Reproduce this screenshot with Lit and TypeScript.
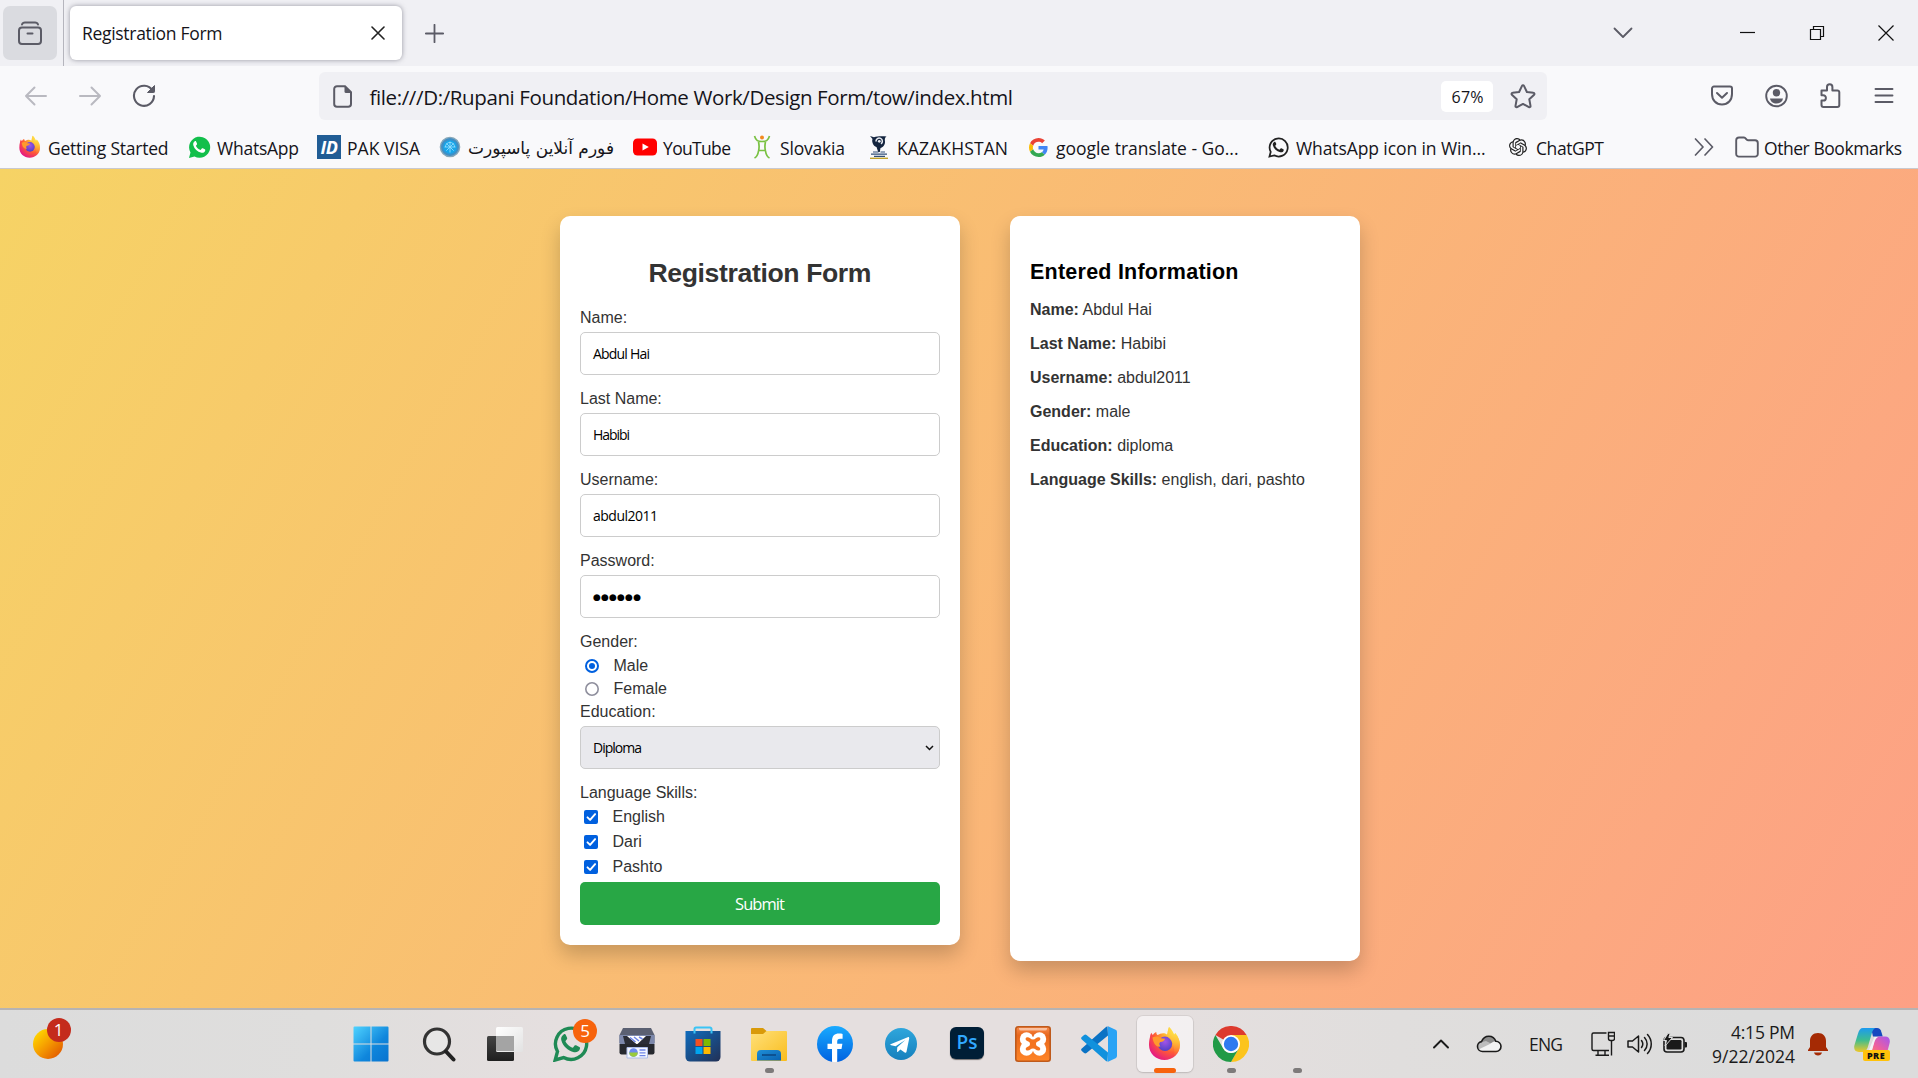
import { LitElement, html, svg, css } from "lit";
import { customElement, property } from "lit/decorators.js";

/** A single line of text, tracked so that it fills the given width. */
@customElement("fit-text")
class FitText extends LitElement {
  @property() text = "";
  @property({ type: Number }) w = 0;
  static styles = css`
    :host { display: block; flex: none; white-space: pre; }
    .t { display: inline-block; }
  `;
  render() {
    return html`<span class="t">${this.text}</span>`;
  }
  updated() {
    const el = this.renderRoot.querySelector(".t") as HTMLElement;
    el.style.letterSpacing = "0px";
    const natural = el.getBoundingClientRect().width;
    const n = this.text.length;
    if (this.w && n > 1) {
      el.style.letterSpacing = `${(this.w - natural) / (n - 1)}px`;
      this.style.width = `${this.w}px`;
    }
  }
}

const fit = (text: string, w: number) => html`<fit-text .text=${text} .w=${w}></fit-text>`;
const ico = (w: number, h: number, box: string, body: unknown) =>
  html`<svg width=${w} height=${h} viewBox=${box} fill="none" style="display:block;flex:none">${body}</svg>`;

const S = "#5b5b66";

const firefoxBody = (id: string) => svg`
  <defs>
    <radialGradient id=${id + "a"} cx="0.8" cy="0.12" r="1"><stop offset="0" stop-color="#fff44f"/><stop offset=".35" stop-color="#ffb02e"/><stop offset=".65" stop-color="#ff5a36"/><stop offset="1" stop-color="#e31587"/></radialGradient>
    <radialGradient id=${id + "b"} cx=".5" cy=".35" r=".7"><stop offset="0" stop-color="#a354e8"/><stop offset="1" stop-color="#4a3fc4"/></radialGradient>
    <linearGradient id=${id + "c"} x1="1" y1="0" x2="0.6" y2="1"><stop offset="0" stop-color="#fff44f"/><stop offset="1" stop-color="#ffa02e" stop-opacity="0.1"/></linearGradient>
  </defs>
  <path d="M3 11c0-2 .9-3.500 1.500-4.300.2 1 .7 1.800 1.400 2.300C6.500 7.600 8 6.400 9.300 5.900c-.1 1 .4 2.400 1.300 3.200C13 7.500 17 6 20 8.500c1-1.500.5-4.500 2-7.500 3 2.500 4 5.500 5 7.500.9-.3 1-1 1-1.700C31.500 11 33 15 33 19c0 8.500-7 15-15.500 15S2 27.500 2 19c0-3 .3-5.500 1-8z" fill=${`url(#${id}a)`}/>
  <circle cx="18" cy="17.800" r="7.200" fill=${`url(#${id}b)`}/>
  <path d="M5.500 11.500c3-1.500 6-1.500 8.500.8l4 .4c-.3 2-2 2.900-4.600 3.400-1.300.5-1.500 2.500 0 4.400-4.400 1-7.200-3.500-7.900-9z" fill="#ff9a2c"/>
  <path d="M22 1c3 2.500 4 5.500 5 7.500.9-.3 1-1 1-1.700C31.500 11 33 15 33 19c0 5-2.500 9-6 11 1-4 .5-14-6.500-19C20 8 20.700 4 22 1z" fill=${`url(#${id}c)`}/>`;

const phone = "M10.600 8.400c.7-.7 1.600-.6 2 .2l1.500 3.100c.3.700.1 1.300-.4 1.900l-1 1.100c-.3.400-.3.800 0 1.300 1.600 2.700 3.600 4.400 6.200 5.600.5.200.9.200 1.200-.2l1.500-1.800c.4-.5 1-.6 1.500-.3l3.200 1.600c.7.400.9.800.7 1.600-.6 2.900-3.300 4.300-6 3.700-6.500-1.600-11-5.900-12.700-11.900-.6-2.300.3-4.500 2.300-5.900z";

const waGreen = ico(23, 23, "0 0 36 36", svg`<path d="M1.500 34.500l2.400-8.700A16.500 16.500 0 1 1 10.200 32z" fill="#12bf4b"/><path d=${phone} fill="#fff"/>`);
const waBlack = ico(21, 21, "0 0 36 36", svg`<path d="M2.500 33.500l2.200-8.100A15.500 15.500 0 1 1 10.600 31.400z" stroke="#222" stroke-width="3"/><path d=${phone} fill="#222"/>`);
const idIcon = html`<span class="id-ico">ID</span>`;
const globe = ico(22, 22, "0 0 24 24", svg`<circle cx="12" cy="12" r="10.500" fill="#3f8fc6" stroke="#87a7b8" stroke-width="1.500"/><circle cx="12" cy="12" r="7.500" fill="#18a5e8"/><path d="M7 12a5 5 0 0 1 10 0M12 6v12M8 8l8 8M16 8l-8 8M6 12h12" stroke="#8fdcff" stroke-width="1"/>`);
const yt = ico(24, 18, "0 0 24 18", svg`<rect x="0" y=".5" width="24" height="17" rx="4.500" fill="#f00"/><path d="M9.500 5.500v7l6.300-3.500z" fill="#fff"/>`);
const slovakia = ico(24, 24, "0 0 24 24", svg`<circle cx="12" cy="2.500" r="2" fill="#f28a1e"/><path d="M4.500 1c1.500 5 3.500 5.500 7.500 5.500S18 6 19.500 1M8.500 7c.8 3 .8 6 0 9M15.500 7c-.8 3-.8 6 0 9M8.500 15.500h7M8.500 16c-.5 3.500-2 6-4 7M15.500 16c.5 3.500 2 6 4 7" stroke="#79c142" stroke-width="1.700"/>`);
const kaz = ico(24, 24, "0 0 24 24", svg`<path d="M3 1l4 1.200c3-1 8-1.400 12.500-.7-2 1-1.800 3-1.500 5 .3 3.500-2.500 6-4.500 6.500L12.800 17h-1.600L9.500 12C6 11 4.500 6.500 5.500 4z" fill="#14253f"/><path d="M9 6.500a3.200 3.200 0 1 1 5 2.400" stroke="#e9ecf2" stroke-width="1.500"/><circle cx="12.300" cy="6.300" r="1.400" fill="#e9ecf2"/><path d="M4 19.200h16M6 17h5.500M13.500 17h4.500M7 21.300h11" stroke="#33507a" stroke-width="1.200"/><path d="M3 23.300h18" stroke="#c0a22c" stroke-width="1.400"/>`);
const google = ico(19, 19, "0 0 48 48", svg`<path fill="#EA4335" d="M24 9.500c3.540 0 6.710 1.220 9.210 3.600l6.850-6.850C35.900 2.380 30.470 0 24 0 14.620 0 6.510 5.380 2.560 13.220l7.980 6.190C12.430 13.720 17.740 9.500 24 9.500z"/><path fill="#4285F4" d="M46.980 24.550c0-1.570-.15-3.090-.38-4.550H24v9.020h12.940c-.58 2.960-2.260 5.480-4.780 7.180l7.730 6c4.510-4.180 7.090-10.360 7.090-17.650z"/><path fill="#FBBC05" d="M10.530 28.590c-.48-1.450-.76-2.990-.76-4.590s.27-3.140.76-4.590l-7.980-6.190C.92 16.460 0 20.120 0 24c0 3.880.92 7.540 2.560 10.780l7.970-6.190z"/><path fill="#34A853" d="M24 48c6.480 0 11.930-2.130 15.890-5.810l-7.730-6c-2.150 1.450-4.920 2.300-8.160 2.300-6.260 0-11.570-4.220-13.470-9.910l-7.980 6.190C6.510 42.620 14.620 48 24 48z"/>`);
const gpt = ico(18, 18, "0 0 24 24", svg`<path fill="#222" d="M22.2819 9.8211a5.9847 5.9847 0 0 0-.5157-4.9108 6.0462 6.0462 0 0 0-6.5098-2.9A6.0651 6.0651 0 0 0 4.9807 4.1818a5.9847 5.9847 0 0 0-3.9977 2.9 6.0462 6.0462 0 0 0 .7427 7.0966 5.98 5.98 0 0 0 .511 4.9107 6.051 6.051 0 0 0 6.5146 2.9001A5.9847 5.9847 0 0 0 13.2599 24a6.0557 6.0557 0 0 0 5.7718-4.2058 5.9894 5.9894 0 0 0 3.9977-2.9001 6.0557 6.0557 0 0 0-.7475-7.0729zm-9.022 12.6081a4.4755 4.4755 0 0 1-2.8764-1.0408l.1419-.0804 4.7783-2.7582a.7948.7948 0 0 0 .3927-.6813v-6.7369l2.02 1.1686a.071.071 0 0 1 .038.052v5.5826a4.504 4.504 0 0 1-4.4945 4.4944zm-9.6607-4.1254a4.4708 4.4708 0 0 1-.5346-3.0137l.142.0852 4.783 2.7582a.7712.7712 0 0 0 .7806 0l5.8428-3.3685v2.3324a.0804.0804 0 0 1-.0332.0615L9.74 19.9502a4.4992 4.4992 0 0 1-6.1408-1.6464zM2.3408 7.8956a4.485 4.485 0 0 1 2.3655-1.9728V11.6a.7664.7664 0 0 0 .3879.6765l5.8144 3.3543-2.0201 1.1685a.0757.0757 0 0 1-.071 0l-4.8303-2.7865A4.504 4.504 0 0 1 2.3408 7.872zm16.5963 3.8558L13.1038 8.364 15.1192 7.2a.0757.0757 0 0 1 .071 0l4.8303 2.7913a4.4944 4.4944 0 0 1-.6765 8.1042v-5.6772a.79.79 0 0 0-.407-.667zm2.0107-3.0231l-.142-.0852-4.7735-2.7818a.7759.7759 0 0 0-.7854 0L9.409 9.2297V6.8974a.0662.0662 0 0 1 .0284-.0615l4.8303-2.7866a4.4992 4.4992 0 0 1 6.6802 4.66zM8.3065 12.863l-2.02-1.1638a.0804.0804 0 0 1-.038-.0567V6.0742a4.4992 4.4992 0 0 1 7.3757-3.4537l-.142.0805L8.704 5.459a.7948.7948 0 0 0-.3927.6813zm1.0976-2.3654l2.602-1.4998 2.6069 1.4998v2.9994l-2.5974 1.4997-2.6067-1.4997Z"/>`);

/* Bookmark: icon, label, label width, distance to the next item's start. */
const bookmarks: [unknown, string, number, number][] = [
  [ico(24, 24, "0 0 36 36", firefoxBody("fs")), "Getting Started", 120.5, 169],
  [waGreen, "WhatsApp", 82, 130],
  [idIcon, "PAK VISA", 73, 121],
  [globe, "فورم آنلاین پاسپورت", 145, 195],
  [yt, "YouTube", 68, 117],
  [slovakia, "Slovakia", 65, 117],
  [kaz, "KAZAKHSTAN", 111, 159],
  [google, "google translate - Go...", 182.5, 240],
  [waBlack, "WhatsApp icon in Win...", 189.5, 240],
  [gpt, "ChatGPT", 68, 98],
];

const start = ico(36, 36, "0 0 36 36", svg`<defs><linearGradient id="w" x1="0" y1="0" x2="1" y2="1"><stop offset="0" stop-color="#4fd3ff"/><stop offset=".6" stop-color="#0f86dc"/><stop offset="1" stop-color="#0873cf"/></linearGradient></defs><path d="M1.500.5h16v17H.500v-16a1 1 0 0 1 1-1zM18.500.500h16a1 1 0 0 1 1 1v16h-17zM.500 18.500h17v17h-16a1 1 0 0 1-1-1zM18.500 18.500h17v16a1 1 0 0 1-1 1h-16z" fill="url(#w)"/>`);
const search = ico(36, 36, "0 0 36 36", svg`<circle cx="16" cy="15.500" r="12.500" fill="#e9e9e9" fill-opacity=".7" stroke="#333" stroke-width="3.200"/><path d="M25 25.500l7.500 8" stroke="#222" stroke-width="4" stroke-linecap="round"/>`);
const taskview = ico(36, 36, "0 0 36 36", svg`<defs><linearGradient id="tv" x1="0" y1="0" x2="0" y2="1"><stop offset="0" stop-color="#444"/><stop offset="1" stop-color="#1f1f1f"/></linearGradient><linearGradient id="tw" x1="0" y1="0" x2="1" y2="1"><stop offset="0" stop-color="#fff"/><stop offset="1" stop-color="#e2e2e2"/></linearGradient></defs><rect x="0" y="10" width="27" height="25" rx="1.500" fill="url(#tv)"/><rect x="9" y="1" width="27" height="25" rx="1.500" fill="url(#tw)"/><path d="M9 10h18v15H10a1 1 0 0 1-1-1z" fill="#a4a4a4"/>`);
const waTask = ico(36, 36, "0 0 36 36", svg`<path d="M2.200 34l2.300-8.500A15.600 15.600 0 1 1 10.600 31.500z" stroke="#1f8a55" stroke-width="3.400"/><path d=${phone} fill="#1f8a55"/>`);
const scanner = ico(36, 36, "0 0 36 36", svg`<path d="M4 2h28l3.500 7v8H.500V9z" fill="#5b6072"/><path d="M.500 9h35v9H.500z" fill="#7d88ab"/><path d="M4 10h28l-2 8H6z" fill="#2b2d36"/><path d="M8 10h19l-9 8.500z" fill="#fff"/><path d="M11 11.500l5.500 4.500M15 11l5 4M20 11l3.500 2" stroke="#6f86e8" stroke-width="1.600"/><path d="M.500 18h35v8.500a2 2 0 0 1-2 2h-31a2 2 0 0 1-2-2z" fill="#26282e"/><path d="M8 21.500h20.500v10.500H8z" fill="#f4f7ff" stroke="#aebde8"/><circle cx="14.500" cy="26.500" r="4.300" fill="#6d8bf0"/><path d="M14.500 26.500h4.300a4.300 4.300 0 0 1-8.600 0z" fill="#9acb3b"/><path d="M20.500 24h6M20.500 26.800h6M20.500 29.600h6" stroke="#6f86e8" stroke-width="1.300"/>`);
const store = ico(36, 36, "0 0 36 36", svg`<defs><linearGradient id="st" x1="0" y1="0" x2="1" y2="1"><stop offset="0" stop-color="#0f6cbd"/><stop offset="1" stop-color="#223055"/></linearGradient></defs><path d="M.500 5h35v26a4.500 4.500 0 0 1-4.500 4.500H5a4.500 4.500 0 0 1-4.500-4.500z" fill="url(#st)"/><path d="M9.500 7.500V3a1.500 1.500 0 0 1 1.500-1.500h14A1.500 1.500 0 0 1 26.500 3v4.500" stroke="#3ac4f5" stroke-width="2"/><path d="M10.500 13h7v7h-7z" fill="#f25022"/><path d="M18.500 13h7v7h-7z" fill="#7fba00"/><path d="M10.500 21h7v7h-7z" fill="#00a4ef"/><path d="M18.500 21h7v7h-7z" fill="#ffb900"/>`);
const explorer = ico(36, 36, "0 0 36 36", svg`<defs><linearGradient id="ex" x1="0" y1="0" x2="1" y2="1"><stop offset="0" stop-color="#ffe07a"/><stop offset="1" stop-color="#f9bd1d"/></linearGradient><linearGradient id="ey" x1="0" y1="0" x2="1" y2="1"><stop offset="0" stop-color="#1f8fd8"/><stop offset="1" stop-color="#0a62b0"/></linearGradient></defs><path d="M0 3a1 1 0 0 1 1-1h11l3.500 3H35v5H0z" fill="#d99a09"/><path d="M0 8h12l3.500-3H35a1 1 0 0 1 1 1v28a1 1 0 0 1-1 1H1a1 1 0 0 1-1-1z" fill="url(#ex)"/><path d="M6 34.500V28a4 4 0 0 1 4-4h16a4 4 0 0 1 4 4v6.500z" fill="url(#ey)"/><path d="M11 29h14" stroke="#0d4d8c" stroke-width="1.800"/>`);
const facebook = ico(36, 36, "0 0 36 36", svg`<defs><linearGradient id="fb" x1="0" y1="0" x2="0" y2="1"><stop offset="0" stop-color="#19aaff"/><stop offset="1" stop-color="#0062e0"/></linearGradient></defs><circle cx="18" cy="18" r="18" fill="url(#fb)"/><path d="M15 35.800V23h-4.500v-5.300H15v-2.500c0-5.500 2.600-7.700 7-7.700 1.400 0 2.800.1 3.600.4v4.800h-2.400c-2.300 0-3 1-3 3v2h5.200L24.500 23h-4.300v12.800c-1.800.3-3.500.3-5.200 0z" fill="#fff"/>`);
const telegram = ico(36, 36, "0 0 36 36", svg`<defs><linearGradient id="tg" x1="0" y1="0" x2="0" y2="1"><stop offset="0" stop-color="#2fa6dc"/><stop offset="1" stop-color="#1580bd"/></linearGradient></defs><circle cx="18" cy="18" r="16" fill="url(#tg)"/><path d="M7.500 18.200l17.200-7c1-.4 1.700.2 1.500 1.400l-2.700 13.200c-.2 1.100-.9 1.300-1.800.8l-4.300-3.200-2.400 2.300c-.5.500-1 .3-1-.4l.3-4 8-7.200-9.700 6.200-4.500-1.100c-.9-.2-1-.7-.6-1z" fill="#fff"/>`);
const ps = html`<span class="ps-ico">Ps</span>`;
const xampp = ico(36, 36, "0 0 36 36", svg`<defs><linearGradient id="xa" x1="0" y1="0" x2="0" y2="1"><stop offset="0" stop-color="#f98a4a"/><stop offset=".25" stop-color="#e8671c"/><stop offset="1" stop-color="#ff8526"/></linearGradient></defs><rect x=".8" y=".8" width="34.400" height="34.400" rx="2.500" fill="url(#xa)" stroke="#bf5a1c" stroke-width="1.600"/><path d="M4 2h28v1a2 2 0 0 1-2 1.500H6A2 2 0 0 1 4 3z" fill="#fff" opacity=".5"/><g fill="#fff"><circle cx="11.500" cy="13" r="6.700"/><circle cx="24.500" cy="13" r="6.700"/><circle cx="11.500" cy="23" r="6.700"/><circle cx="24.500" cy="23" r="6.700"/><path d="M8 11h20v14H8z"/></g><path d="M18 13.500c-2.500 0-3.500-2.500-6-2.200-2 .4-1.800 3 .2 3.700 1.500.6 2.800 1.200 2.800 3s-1.500 2.500-2.800 3c-2 .8-2 3.400.2 3.600 2.400.2 3.200-2.200 5.600-2.200s3.200 2.400 5.600 2.200c2.200-.2 2.200-2.800.2-3.600-1.300-.5-2.800-1.200-2.800-3s1.300-2.400 2.800-3c2-.7 2.200-3.300.2-3.700-2.500-.3-3.500 2.200-6 2.200z" fill="#f4741f"/>`);
const vscode = ico(36, 36, "0 0 36 36", svg`<path d="M26.500.300L27 9.500 5.500 27a2 2 0 0 1-2.400 0l-2.300-2a1.600 1.600 0 0 1 0-2.400L25 1z" fill="#0a72c4"/><path d="M26.500 35.700L27 26.500 5.500 9a2 2 0 0 0-2.400 0L.800 11a1.600 1.600 0 0 0 0 2.400L25 35z" fill="#1191dd"/><path d="M27 .200L34.600 3.800a2.400 2.400 0 0 1 1.400 2.200v24a2.400 2.400 0 0 1-1.400 2.200L27 35.800z" fill="#29a3f5"/>`);
const chrome = ico(36, 36, "0 0 36 36", svg`<path d="M18 18L2.400 9A18 18 0 0 1 33.600 9z" fill="#dd3a2e"/><path d="M18 9h15.600A18 18 0 0 1 18 36l7.800-13.500z" fill="#fcc41d"/><path d="M2.400 9l7.800 13.500A9 9 0 0 0 25.800 22.500L18 36A18 18 0 0 1 2.400 9z" fill="#219a47"/><circle cx="18" cy="18" r="9" fill="#fff"/><circle cx="18" cy="18" r="7.200" fill="#2e7af0"/>`);

/* Taskbar app: icon, running state, badge count. */
const apps: [unknown, string, string][] = [
  [start, "first", ""], [search, "", ""], [taskview, "", ""], [waTask, "", "5"], [scanner, "", ""],
  [store, "", ""], [explorer, "run", ""], [facebook, "", ""], [telegram, "", ""], [ps, "", ""],
  [xampp, "", ""], [vscode, "", ""], [ico(36, 36, "0 0 36 36", firefoxBody("ft")), "active", ""],
  [chrome, "run", ""], ["", "run", ""],
];

@customElement("app-root")
class AppRoot extends LitElement {
  static styles = css`
    :host { display: block; width: 1918px; height: 1078px; overflow: hidden; }
    * { box-sizing: border-box; }
    .screen { display: flex; flex-direction: column; width: 1918px; height: 1078px; color: #15141a; font-family: "Open Sans", "Noto Sans", sans-serif; }
    .c { display: flex; align-items: center; justify-content: center; flex: none; }

    .tabs { display: flex; align-items: center; height: 66px; background: #f0f0f4; padding-left: 3px; flex: none; }
    .fxview { width: 54px; height: 54px; border-radius: 7px; background: #dadbe0; }
    .sep { width: 1px; height: 66px; margin: 0 6px; background: #b5b5bd; }
    .tab { display: flex; align-items: center; width: 332px; height: 54px; margin: 0 23px 0 0; padding: 0 17px 0 12px; justify-content: space-between; background: #fff; border-radius: 6px; box-shadow: 0 0 5px rgba(90, 90, 105, .6); font-size: 17.500px; line-height: 26px; }
    .grow { flex: 1; }
    .winbtn { width: 69px; }
    .chev { margin-right: 56px; }
    .winbtns { display: flex; margin-right: -2px; }

    .nav { display: flex; align-items: center; height: 60px; background: #f9f9fb; padding: 0 7px 0 9px; flex: none; }
    .nb { width: 54px; }
    .url { display: flex; align-items: center; width: 1228px; height: 48px; margin-left: 148px; padding: 0 11px 0 14px; background: #f0f0f4; border-radius: 6px; font-size: 20.500px; line-height: 28px; }
    .url fit-text.addr { margin-left: 17.500px; padding-top: 1px; }
    .zoom { width: 52px; height: 31px; padding: 1px 0 0 1px; margin-right: 17px; background: #fff; border-radius: 5px; font-size: 16px; line-height: 24px; }

    .marks { display: flex; align-items: center; height: 43px; padding: 0 16px 0 18px; background: #f9f9fb; border-bottom: 1px solid #c9c9cf; font-size: 17.500px; line-height: 26px; flex: none; }
    .mark { display: flex; align-items: center; flex: none; gap: 6px; }
    .mark fit-text, .other fit-text { padding-top: 1px; }
    .mi { width: 24px; height: 24px; }
    .fa { font-family: "DejaVu Sans", sans-serif; font-size: 17px; white-space: nowrap; padding-top: 1px; }
    .id-ico { width: 24px; height: 24px; background: #215d95; color: #fff; font: italic bold 18px/24px "Open Sans", sans-serif; text-align: center; letter-spacing: -.5px; }
    .other { display: flex; align-items: center; gap: 5px; margin-left: 21px; }

    .page { display: flex; justify-content: center; align-items: flex-start; gap: 50px; height: 839px; padding: 47px 0 0 2px; background: linear-gradient(120deg, #f6d365 0%, #fda085 100%); font-family: "Liberation Sans", Arial, sans-serif; font-size: 16px; line-height: 20px; color: #333; flex: none; }
    .card { background: #fff; border-radius: 10px; padding: 41px 20px 20px; box-shadow: 0 10px 20px rgba(0, 0, 0, .2); }
    .form { width: 400px; height: 729px; display: flex; flex-direction: column; }
    .info { width: 350px; height: 745px; }
    .h { display: flex; justify-content: center; height: 33px; font-size: 26.600px; line-height: 33px; font-weight: bold; margin-bottom: 18px; }
    .label { height: 20px; margin-bottom: 4px; }
    .field { display: flex; align-items: center; height: 43px; margin-bottom: 14px; padding: 0 5px 0 12px; border: 1px solid #ccc; border-radius: 5px; background: #fff; color: #000; font-family: "Open Sans", sans-serif; font-size: 14px; line-height: 20px; flex: none; }
    .dots { font-family: "DejaVu Sans", sans-serif; font-size: 9px; padding-top: 1px; }
    .select { background: #e9e9ed; justify-content: space-between; }
    .tight { margin-bottom: 2px; }
    .snug { margin-bottom: 1px; }
    .opt { display: flex; align-items: center; height: 23px; padding-left: 5px; gap: 14.500px; }
    .chk { height: 25px; padding: 1px 0 0 4px; }
    .edu { margin-top: 2px; }
    .submit { height: 43px; margin-top: 3px; background: #28a745; border-radius: 5px; color: #fff; font-family: "Open Sans", sans-serif; font-size: 16.500px; }
    .h3 { font-size: 21.500px; line-height: 30px; font-weight: bold; color: #000; margin-bottom: 13px; }
    .row { height: 34px; }
    .row b { font-weight: bold; }

    .task { display: flex; align-items: center; position: relative; height: 70px; border-top: 2px solid #b6b3b3; background: linear-gradient(90deg, #dcdcdc 0, #dfdedd 320px, #e5dfdf 560px, #e5dfdf 1150px, #e0dedd 1400px, #dcdcdc 1750px, #dcdcdc 100%); font-size: 17.500px; flex: none; color: #1a1a1a; }
    .weather { position: relative; width: 30px; height: 30px; margin: 0 277px 0 33px; border-radius: 50%; background: linear-gradient(135deg, #ffd800 10%, #f59a00 50%, #e25a00 90%); }
    .badge { position: absolute; width: 24px; height: 24px; border-radius: 50%; color: #fff; font-size: 17px; line-height: 24px; text-align: center; }
    .red { background: #c42b1c; left: 13.500px; top: -11px; }
    .org { background: #f7630c; left: 35px; top: 3px; }
    .app { position: relative; width: 66px; height: 56px; }
    .app.first { padding-right: 4px; }
    .app.active::before { content: ""; position: absolute; inset: 0 5px; background: rgba(248, 246, 247, .75); border-radius: 6px; box-shadow: 0 0 0 1px rgba(0, 0, 0, .06), 0 1px 2px rgba(0, 0, 0, .12); }
    .app svg { position: relative; }
    .app.run::after, .app.active::after { content: ""; position: absolute; left: 28.500px; bottom: -1px; width: 9px; height: 5px; border-radius: 3px; background: #7d7a7a; }
    .app.active::after { left: 22px; width: 22px; background: #f7630c; }
    .ps-ico { width: 34px; height: 32px; margin-top: -3px; border-radius: 6px; background: #001e36; color: #31a8ff; font: 600 19px/30px "Open Sans", sans-serif; text-align: center; box-shadow: 0 1px 1px rgba(0, 0, 0, .5); }
    .tray { display: flex; align-items: center; margin-left: 103px; }
    .cloud { margin: 0 27px; }
    .net { margin: 0 12px 0 28px; }
    .bat { margin-left: 11px; }
    .clock { display: flex; flex-direction: column; align-items: flex-end; width: 106px; line-height: 24px; margin-right: 12px; }
    .copilot { display: flex; flex-direction: column; align-items: center; width: 36px; margin-left: 25px; }
    .pre { width: 27px; height: 11px; margin-top: -11px; margin-left: 8px; border-radius: 2px; background: #ffc20a; color: #111; font: 800 9px/11px "Open Sans", sans-serif; letter-spacing: .5px; text-align: center; z-index: 1; }
  `;

  private field(label: string, value: string, w: number, dots = false) {
    return html`<div class="label">${label}</div>
      <div class="field ${dots ? "dots" : ""}">${fit(value, w)}</div>`;
  }

  private check(name: string) {
    return html`<div class="opt chk">${ico(14, 14, "0 0 14 14", svg`<rect width="14" height="14" rx="2" fill="#0060df"/><path d="M3.500 7.300l2.600 2.600 5-5.800" stroke="#fff" stroke-width="1.900" stroke-linecap="round" stroke-linejoin="round"/>`)}<span>${name}</span></div>`;
  }

  private row(k: string, v: string) {
    return html`<div class="row"><b>${k}</b> <span>${v}</span></div>`;
  }

  render() {
    return html`<div class="screen">
      <div class="tabs">
        <div class="fxview c">${ico(26, 26, "0 0 26 26", svg`<rect x="2" y="7.500" width="22" height="16.500" rx="3" stroke=${S} stroke-width="2"/><path d="M5 4.500C5.500 3 6.500 2.500 8 2.500h10c1.500 0 2.500.500 3 2M10.500 13.500h5" stroke=${S} stroke-width="2" stroke-linecap="round"/>`)}</div>
        <div class="sep"></div>
        <div class="tab">${fit("Registration Form", 140.5)}${ico(14, 14, "0 0 14 14", svg`<path d="M1 1l12 12M13 1L1 13" stroke="#222" stroke-width="1.600" stroke-linecap="round"/>`)}</div>
        ${ico(19, 19, "0 0 19 19", svg`<path d="M9.500.800v17.400M.800 9.500h17.400" stroke=${S} stroke-width="1.800" stroke-linecap="round"/>`)}
        <div class="grow"></div>
        <div class="c winbtn chev">${ico(20, 12, "0 0 20 12", svg`<path d="M1.500 1.500L10 10l8.500-8.500" stroke=${S} stroke-width="1.800" stroke-linecap="round" stroke-linejoin="round"/>`)}</div>
        <div class="winbtns">
          <div class="c winbtn">${ico(16, 16, "0 0 16 16", svg`<path d="M0 7.500h15" stroke="#111" stroke-width="1.200"/>`)}</div>
          <div class="c winbtn">${ico(16, 16, "0 0 16 16", svg`<path d="M1.500 4.500h10v10h-10zM4.500 4.500v-3h10v10h-3" stroke="#111" stroke-width="1.200"/>`)}</div>
          <div class="c winbtn">${ico(16, 16, "0 0 16 16", svg`<path d="M.5.5l15 15M15.500.5l-15 15" stroke="#111" stroke-width="1.200"/>`)}</div>
        </div>
      </div>

      <div class="nav">
        <div class="c nb">${ico(24, 24, "0 0 24 24", svg`<path d="M22 12H2M10.500 3.500L2 12l8.500 8.500" stroke="#b9b9c0" stroke-width="2" stroke-linecap="round" stroke-linejoin="round"/>`)}</div>
        <div class="c nb">${ico(24, 24, "0 0 24 24", svg`<path d="M2 12h20M13.500 3.500L22 12l-8.500 8.500" stroke="#b9b9c0" stroke-width="2" stroke-linecap="round" stroke-linejoin="round"/>`)}</div>
        <div class="c nb">${ico(24, 24, "0 0 24 24", svg`<path d="M20.500 6.500A10 10 0 1 0 22 12" stroke=${S} stroke-width="2.100" stroke-linecap="round"/><path d="M22.500 1.500v6.200a.8.800 0 0 1-.8.800h-6.200z" fill=${S} stroke=${S} stroke-linejoin="round"/>`)}</div>
        <div class="url">
          ${ico(19, 23, "0 0 19 23", svg`<path d="M4 1.200h8l6 6V19a2.800 2.800 0 0 1-2.800 2.800H4A2.800 2.800 0 0 1 1.200 19V4A2.800 2.800 0 0 1 4 1.200z" stroke=${S} stroke-width="2"/><path d="M11.500 1v5.500a1.500 1.500 0 0 0 1.500 1.500h5.500z" fill=${S}/>`)}
          <fit-text class="addr" .text=${"file:///D:/Rupani Foundation/Home Work/Design Form/tow/index.html"} .w=${643.5}></fit-text>
          <div class="grow"></div>
          <div class="zoom c">${fit("67%", 32)}</div>
          ${ico(26, 26, "0 0 26 26", svg`<path d="M13 2.200c.5 0 .8.300 1 .7l2.900 6.100 6.500.8c1 .1 1.400 1.200.7 1.900l-4.800 4.600 1.200 6.600c.2 1-.7 1.600-1.600 1.200L13 20.900l-5.900 3.200c-.9.400-1.800-.2-1.600-1.200l1.200-6.600-4.800-4.600c-.7-.7-.3-1.800.7-1.900L9.100 9 12 2.900c.2-.4.5-.7 1-.7z" stroke=${S} stroke-width="2" stroke-linejoin="round"/>`)}
        </div>
        <div class="grow"></div>
        <div class="c nb">${ico(24, 24, "0 0 24 24", svg`<path d="M4 2.500h16a2 2 0 0 1 2 2V10c0 6-4 10.500-10 10.500S2 16 2 10V4.500a2 2 0 0 1 2-2z" stroke=${S} stroke-width="2"/><path d="M7 9l5 4.700L17 9" stroke=${S} stroke-width="2" stroke-linecap="round" stroke-linejoin="round"/>`)}</div>
        <div class="c nb">${ico(24, 24, "0 0 24 24", svg`<circle cx="12.500" cy="12" r="10.300" stroke=${S} stroke-width="1.900"/><circle cx="12.500" cy="8.800" r="3.700" fill=${S}/><path d="M6 14.500h13c-.5 3-3 5-6.500 5s-6-2-6.500-5z" fill=${S}/>`)}</div>
        <div class="c nb">${ico(24, 26, "0 0 24 26", svg`<path d="M3.500 7.500H9V4a2.700 2.700 0 0 1 5.400 0v3.500h5.100a1.800 1.800 0 0 1 1.800 1.800V22a2 2 0 0 1-2 2H5.500a2 2 0 0 1-2-2v-4.500h1.800a2.600 2.600 0 0 0 0-5.200H3.500z" stroke=${S} stroke-width="2" stroke-linejoin="round"/>`)}</div>
        <div class="c nb">${ico(20, 18, "0 0 20 18", svg`<path d="M1.500 2h17M1.500 8.500h17M1.500 15h17" stroke=${S} stroke-width="1.900" stroke-linecap="round"/>`)}</div>
      </div>

      <div class="marks">
        ${bookmarks.map(([icon, label, w, step], i) => html`<div class="mark" style="width:${step}px">
          <div class="mi c">${icon}</div>${i === 3 ? html`<span class="fa" dir="rtl">${label}</span>` : fit(label, w)}
        </div>`)}
        <div class="grow"></div>
        ${ico(20, 18, "0 0 20 18", svg`<path d="M1.500 1l7.500 8-7.500 8M11 1l7.500 8-7.500 8" stroke=${S} stroke-width="1.700" stroke-linecap="round" stroke-linejoin="round"/>`)}
        <div class="other">${ico(24, 22, "0 0 24 22", svg`<path d="M4 1.500h5c2 0 2 2.800 4 2.800h7a2.800 2.800 0 0 1 2.800 2.800V18a2.600 2.600 0 0 1-2.800 2.600H4A2.600 2.600 0 0 1 1.200 18V4.200A2.800 2.800 0 0 1 4 1.500z" stroke=${S} stroke-width="1.900"/>`)}${fit("Other Bookmarks", 138)}</div>
      </div>

      <div class="page">
        <div class="card form">
          <div class="h">${fit("Registration Form", 223)}</div>
          ${this.field("Name:", "Abdul Hai", 57)}
          ${this.field("Last Name:", "Habibi", 37)}
          ${this.field("Username:", "abdul2011", 65)}
          ${this.field("Password:", "●●●●●●", 48, true)}
          <div class="label tight">Gender:</div>
          <div class="opt">${ico(14, 14, "0 0 14 14", svg`<circle cx="7" cy="7" r="6" stroke="#0060df" stroke-width="2"/><circle cx="7" cy="7" r="3" fill="#0060df"/>`)}<span>Male</span></div>
          <div class="opt">${ico(14, 14, "0 0 14 14", svg`<circle cx="7" cy="7" r="6.200" stroke="#8f8f9d" stroke-width="1.600"/>`)}<span>Female</span></div>
          <div class="label edu">Education:</div>
          <div class="field select">${fit("Diploma", 49)}${ico(9, 6, "0 0 9 6", svg`<path d="M1 1l3.500 3.500L8 1" stroke="#111" stroke-width="1.500"/>`)}</div>
          <div class="label snug">Language Skills:</div>
          ${this.check("English")}${this.check("Dari")}${this.check("Pashto")}
          <div class="submit c">${fit("Submit", 50)}</div>
        </div>
        <div class="card info">
          <div class="h3">${fit("Entered Information", 208.5)}</div>
          ${this.row("Name:", "Abdul Hai")}
          ${this.row("Last Name:", "Habibi")}
          ${this.row("Username:", "abdul2011")}
          ${this.row("Gender:", "male")}
          ${this.row("Education:", "diploma")}
          ${this.row("Language Skills:", "english, dari, pashto")}
        </div>
      </div>

      <div class="task">
        <div class="weather"><span class="badge red">1</span></div>
        ${apps.map(([icon, state, n]) => html`<div class="app c ${state}">${icon}${n ? html`<span class="badge org">${n}</span>` : ""}</div>`)}
        <div class="tray">
          ${ico(16, 10, "0 0 16 10", svg`<path d="M1 8.500L8 1.500l7 7" stroke="#1a1a1a" stroke-width="1.900" stroke-linecap="round" stroke-linejoin="round"/>`)}
          <div class="cloud">${ico(26, 18, "0 0 26 18", svg`<path d="M6.500 16.500a5 5 0 0 1-1-9.900C7 3 9.500 1.200 12.800 1.200c3.400 0 6 2 7 5.100a5.100 5.100 0 0 1 .2 10.200z" fill="#f3f3f3"/><path d="M5.500 6.600C7 3 9.500 1.200 12.800 1.200c3.400 0 6 2 7 5.100-2 0-3 .7-5 2L9 7.500z" fill="#8d8d8d"/><path d="M2.500 14.500L15 8.500l-5-2.500-6 1.500-2.500 3z" fill="#bdbdbd"/><path d="M6.500 16.500a5 5 0 0 1-1-9.900C7 3 9.500 1.200 12.800 1.200c3.400 0 6 2 7 5.100a5.100 5.100 0 0 1 .2 10.200z" stroke="#1a1a1a" stroke-width="1.600"/>`)}</div>
          ${fit("ENG", 34)}
          <div class="net">${ico(24, 26, "0 0 24 26", svg`<path d="M15.500 2H2.500A1.500 1.500 0 0 0 1 3.500V18a1.500 1.500 0 0 0 1.500 1.500H18M7 19.500V24M14 19.500V24M4.500 24.200H18M20.500 10v14.500M17.500 1.500h6v6a2 2 0 0 1-2 2h-2a2 2 0 0 1-2-2zM17.500 5h6" stroke="#1a1a1a" stroke-width="1.400"/>`)}</div>
          ${ico(25, 22, "0 0 25 22", svg`<path d="M1 8v6h4.500l6 5V3l-6 5z" stroke="#1a1a1a" stroke-width="1.500" stroke-linejoin="round"/><path d="M14.500 7.500c1.500 2 1.500 5 0 7M17.500 4.500c3.500 3.800 3.500 9.200 0 13M20.500 1.500c5 5.500 5 13.500 0 19" stroke="#1a1a1a" stroke-width="1.500" stroke-linecap="round"/>`)}
          <div class="bat">${ico(26, 22, "0 0 26 22", svg`<rect x="1" y="4.500" width="20" height="14.500" rx="3" stroke="#1a1a1a" stroke-width="1.600"/><rect x="3.500" y="7" width="15" height="9.500" rx="1.200" fill="#1a1a1a"/><path d="M21.500 9h1.500a1 1 0 0 1 1 1v3.500a1 1 0 0 1-1 1h-1.500z" fill="#1a1a1a"/><path d="M5 .3L.500 7.500H3.500L2 13l7.500-8.500H5.800l1.500-4.200z" fill="#1a1a1a" stroke="#dedede" stroke-width="1"/>`)}</div>
          <div class="clock">${fit("4:15 PM", 64)}${fit("9/22/2024", 83)}</div>
          ${ico(22, 24, "0 0 22 24", svg`<path d="M11 1c5 0 8 3.300 8 8v6l2 3v1H1v-1l2-3V9c0-4.700 3-8 8-8z" fill="#a52a04"/><path d="M7 20.500h8c-.5 2-2 3-4 3s-3.500-1-4-3z" fill="#a52a04"/>`)}
          <div class="copilot">
            ${ico(36, 34, "0 0 36 34", svg`<defs><linearGradient id="ca" x1="0" y1="0" x2="0" y2="1"><stop offset="0" stop-color="#1c9af0"/><stop offset=".5" stop-color="#3dbd90"/><stop offset="1" stop-color="#f0c828"/></linearGradient><linearGradient id="cb" x1="1" y1="0" x2="0" y2="1"><stop offset="0" stop-color="#a456f0"/><stop offset=".6" stop-color="#f0609c"/><stop offset="1" stop-color="#ff8a5c"/></linearGradient></defs><path d="M17 1h6c2.500 0 3.600 1.500 4.400 4l1.300 4.500H19z" fill="#1549c0"/><path d="M9 1h12.500c-2 .8-3 3-3.600 5L14 19.500c-1 3.500-2.500 5.500-6 5.500H5c-4 0-5.600-3-4.500-7L4 6.500C5 3 6.500 1 9 1z" fill="url(#ca)"/><path d="M26 27H14.500c2-.8 2.600-1.500 3.200-3.500L20 15c1-3.500 2.500-5.500 6-5.500h5c4 0 5.600 3 4.500 7L33.500 24c-.6 2-2.500 3-7.500 3z" fill="url(#cb)"/><path d="M20.500 10h3.500c-2 1-3 3-3.700 5.500L17.500 25h-4c1.300-1 2-3 2.600-5z" fill="#f4f4f6"/>`)}
            <span class="pre">PRE</span>
          </div>
        </div>
      </div>
    </div>`;
  }
}
